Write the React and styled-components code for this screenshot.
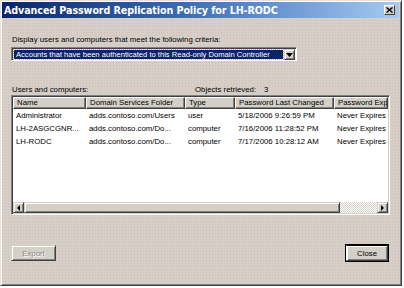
import React from "react";
import styled, { createGlobalStyle } from "styled-components";

const GlobalStyle = createGlobalStyle`
  html, body {
    margin: 0;
    padding: 0;
    background: #ffffff;
  }
  body {
    font-family: "Liberation Sans", Arial, sans-serif;
    color: #000;
  }
`;

const columns = [
  { key: "name", title: "Name", width: 73 },
  { key: "folder", title: "Domain Services Folder", width: 99 },
  { key: "type", title: "Type", width: 50 },
  { key: "changed", title: "Password Last Changed", width: 99 },
  { key: "expires", title: "Password Exp", width: 54 },
];

const rows = [
  {
    name: "Administrator",
    folder: "adds.contoso.com/Users",
    type: "user",
    changed: "5/18/2006 9:26:59 PM",
    expires: "Never Expires",
  },
  {
    name: "LH-2ASGCGNR...",
    folder: "adds.contoso.com/Do...",
    type: "computer",
    changed: "7/16/2006 11:28:52 PM",
    expires: "Never Expires",
  },
  {
    name: "LH-RODC",
    folder: "adds.contoso.com/Do...",
    type: "computer",
    changed: "7/17/2006 10:28:12 AM",
    expires: "Never Expires",
  },
];

const App = () => {
  return (
    <>
      <GlobalStyle />
      <Window>
        <TitleBar>
          <TitleText>Advanced Password Replication Policy for LH-RODC</TitleText>
          <CloseBox>
            <svg width="7" height="6" viewBox="0 0 7 6">
              <path d="M0.5 0.5 L6.5 5.5 M6.5 0.5 L0.5 5.5" stroke="#000" strokeWidth="1.4" />
            </svg>
          </CloseBox>
        </TitleBar>

        <Body>
          <Label>Display users and computers that meet the following criteria:</Label>
          <Combo>
            <ComboValue>
              <Selected>Accounts that have been authenticated to this Read-only Domain Controller</Selected>
            </ComboValue>
            <ComboButton>
              <svg width="7" height="4" viewBox="0 0 7 4">
                <path d="M0 0 H7 L3.5 4 Z" fill="#000" />
              </svg>
            </ComboButton>
          </Combo>

          <ListCaption>
            <CaptionLeft>Users and computers:</CaptionLeft>
            <Label>Objects retrieved:</Label>
            <Count>3</Count>
          </ListCaption>

          <ListView>
            <HeaderRow>
              {columns.map((c) => (
                <HeaderCell key={c.key} $width={c.width}>
                  {c.title}
                </HeaderCell>
              ))}
            </HeaderRow>
            <Rows>
              {rows.map((r) => (
                <Row key={r.name}>
                  {columns.map((c) => (
                    <Cell key={c.key} $width={c.width}>
                      {r[c.key]}
                    </Cell>
                  ))}
                </Row>
              ))}
            </Rows>
            <ScrollBar>
              <ArrowButton>
                <svg width="3" height="6" viewBox="0 0 3 6">
                  <path d="M3 0 V6 L0 3 Z" fill="#000" />
                </svg>
              </ArrowButton>
              <Thumb />
              <Track />
              <ArrowButton>
                <svg width="3" height="6" viewBox="0 0 3 6">
                  <path d="M0 0 V6 L3 3 Z" fill="#000" />
                </svg>
              </ArrowButton>
            </ScrollBar>
          </ListView>

          <Footer>
            <Button disabled>Export</Button>
            <DefaultButton>Close</DefaultButton>
          </Footer>
        </Body>
      </Window>
    </>
  );
};

const Window = styled.div`
  width: 402px;
  height: 286px;
  box-sizing: border-box;
  display: flex;
  flex-direction: column;
  background-color: #d4d0c8;
  background-image: radial-gradient(circle, rgba(232, 160, 184, 0.55) 0.45px, transparent 0.8px);
  background-size: 3px 3px;
  border: 1px solid;
  border-color: #e6e2da #404040 #404040 #e6e2da;
  box-shadow: inset 1px 1px #ffffff, inset -1px -1px #808080;
`;

const TitleBar = styled.div`
  height: 16px;
  margin: 1px 2px 0 1px;
  padding: 0 4px 0 2px;
  display: flex;
  align-items: center;
  justify-content: space-between;
  background: linear-gradient(to right, #0a246a 0%, #3a6ab8 45%, #a6caf0 100%);
`;

const TitleText = styled.span`
  color: #ffffff;
  font-family: "DejaVu Sans", "Liberation Sans", sans-serif;
  font-weight: bold;
  font-size: 9.6px;
  white-space: nowrap;
  letter-spacing: -0.1px;
`;

const CloseBox = styled.div`
  width: 11px;
  height: 10px;
  box-sizing: border-box;
  display: flex;
  align-items: center;
  justify-content: center;
  background: #d4d0c8;
  border: 1px solid;
  border-color: #ffffff #404040 #404040 #ffffff;
`;

const Body = styled.div`
  flex: 1;
  display: flex;
  flex-direction: column;
  padding: 0 11px 0 10px;
`;

const Label = styled.div`
  font-size: 7.8px;
  line-height: 10px;
  white-space: nowrap;

  &:first-child {
    margin-top: 17px;
    padding-left: 1px;
  }
`;

const Combo = styled.div`
  margin-top: 2px;
  width: 286px;
  height: 14px;
  box-sizing: border-box;
  display: flex;
  background: #ffffff;
  border: 1px solid;
  border-color: #808080 #ffffff #ffffff #808080;
  box-shadow: inset 1px 1px #404040;
  padding: 1px 1px 0 1px;
`;

const ComboValue = styled.div`
  flex: 1;
  display: flex;
  padding: 1px;
  min-width: 0;
  outline: 1px dotted #c8c070;
  outline-offset: -1px;
`;

const Selected = styled.div`
  flex: 1;
  min-width: 0;
  background: #0a246a;
  color: #ffffff;
  font-size: 7.6px;
  line-height: 9px;
  padding-left: 2px;
  white-space: nowrap;
  overflow: hidden;
`;

const ComboButton = styled.div`
  width: 11px;
  height: 11px;
  flex-shrink: 0;
  box-sizing: border-box;
  display: flex;
  align-items: center;
  justify-content: center;
  background: #d4d0c8;
  border: 1px solid;
  border-color: #d4d0c8 #404040 #404040 #d4d0c8;
  box-shadow: inset 1px 1px #ffffff, inset -1px -1px #808080;
`;

const ListCaption = styled.div`
  margin-top: 24px;
  display: flex;
  align-items: center;
  padding-left: 1px;
`;

const CaptionLeft = styled(Label)`
  width: 183px;

  &:first-child {
    margin-top: 0;
    padding-left: 0;
  }
`;

const Count = styled(Label)`
  margin-left: 8px;
`;

const ListView = styled.div`
  width: 379px;
  height: 120px;
  box-sizing: border-box;
  display: flex;
  flex-direction: column;
  overflow: hidden;
  background: #ffffff;
  border: 1px solid;
  border-color: #808080 #ffffff #ffffff #808080;
  box-shadow: inset 1px 1px #404040, inset -1px -1px #d4d0c8;
  padding: 1px;
`;

const HeaderRow = styled.div`
  display: flex;
  height: 12px;
  flex-shrink: 0;
`;

const HeaderCell = styled.div`
  width: ${(p) => p.$width}px;
  flex-shrink: 0;
  box-sizing: border-box;
  background: #d4d0c8;
  border: 1px solid;
  border-color: #ffffff #404040 #404040 #ffffff;
  box-shadow: inset -1px -1px #808080;
  font-size: 7.8px;
  line-height: 10px;
  padding-left: 3px;
  white-space: nowrap;
  overflow: hidden;
`;

const Rows = styled.div`
  flex: 1;
  display: flex;
  flex-direction: column;
`;

const Row = styled.div`
  display: flex;
  height: 13px;
  align-items: center;
`;

const Cell = styled.div`
  width: ${(p) => p.$width}px;
  flex-shrink: 0;
  box-sizing: border-box;
  padding-left: 3px;
  font-size: 7.8px;
  white-space: nowrap;
  overflow: hidden;
`;

const ScrollBar = styled.div`
  height: 11px;
  flex-shrink: 0;
  display: flex;
`;

const raised = `
  box-sizing: border-box;
  background: #d4d0c8;
  border: 1px solid;
  border-color: #d4d0c8 #404040 #404040 #d4d0c8;
  box-shadow: inset 1px 1px #ffffff, inset -1px -1px #808080;
`;

const ArrowButton = styled.div`
  ${raised}
  width: 11px;
  display: flex;
  align-items: center;
  justify-content: center;
`;

const Thumb = styled.div`
  ${raised}
  width: 316px;
`;

const Track = styled.div`
  flex: 1;
  background: repeating-conic-gradient(#ffffff 0 25%, #d4d0c8 0 50%) 0 0 / 2px 2px;
`;

const Footer = styled.div`
  margin-top: 29px;
  height: 18px;
  display: flex;
  align-items: center;
  justify-content: space-between;
`;

const Button = styled.button`
  ${raised}
  width: 45px;
  height: 16px;
  padding: 0;
  font-family: "Liberation Sans", Arial, sans-serif;
  font-size: 7.8px;
  color: #000;

  &:disabled {
    color: #8c8a86;
    text-shadow: 1px 1px #ffffff;
  }
`;

const DefaultButton = styled(Button)`
  width: 44px;
  height: 18px;
  margin-right: 1px;
  outline: 1px solid #000;
  outline-offset: -1px;
  border-width: 2px;
  border-color: #000 #404040 #404040 #ffffff;
`;

export default App;
